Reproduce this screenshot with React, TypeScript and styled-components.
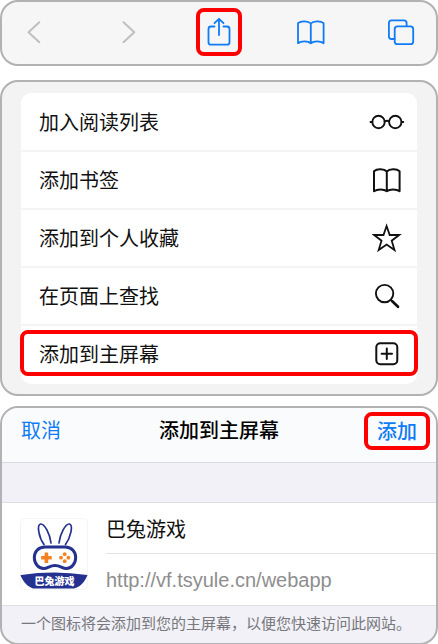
import React from "react";
import styled, { createGlobalStyle } from "styled-components";

const GlobalStyle = createGlobalStyle`
  *, *::before, *::after { box-sizing: border-box; }
  body {
    margin: 0;
    background: #fff;
    color: #111;
    font-family: "Noto Sans CJK SC", "Liberation Sans", sans-serif;
    font-size: 20px;
    line-height: 30px;
  }
  button, input { font: inherit; color: inherit; }
`;

const highlight = "#fe0000";
const blue = "#0f7cf5";

const Page = styled.main`
  display: flex;
  flex-direction: column;
`;

const Panel = styled.section`
  border: 2px solid #b2b2b2;
  border-radius: 18px;
  overflow: hidden;
`;

const Toolbar = styled(Panel)`
  display: flex;
  justify-content: space-between;
  padding: 6px 11px 8px;
  margin-bottom: 14px;
  background: #f6f6f6;
`;

const ToolButton = styled.button<{ $marked?: boolean; $muted?: boolean }>`
  display: flex;
  align-items: center;
  justify-content: center;
  width: 46px;
  height: 48px;
  padding: 0;
  background: none;
  border: 4px solid ${(p) => (p.$marked ? highlight : "transparent")};
  border-radius: 8px;
  color: ${(p) => (p.$muted ? "#bfbfbf" : blue)};
`;

const SheetPanel = styled(Panel)`
  padding: 11px 19px 10px;
  margin-bottom: 10px;
  background: #f3f3f3;
`;

const ActionList = styled.ul`
  list-style: none;
  margin: 0;
  padding: 1px 0 0;
  background: #fff;
  border-radius: 10px;
`;

const ActionItem = styled.li<{ $marked?: boolean }>`
  position: relative;
  border-bottom: 2px solid #f4f4f4;
  &:last-child { border-bottom-color: transparent; }
  ${(p) =>
    p.$marked &&
    `&::after {
      content: "";
      position: absolute;
      inset: 4px -1px 6px;
      border: 4px solid ${highlight};
      border-radius: 8px;
      pointer-events: none;
    }`}
`;

const ActionButton = styled.button`
  display: flex;
  align-items: center;
  justify-content: space-between;
  width: 100%;
  padding: 13px 12px 13px 18px;
  border: 0;
  background: none;
  text-align: left;
`;

const IconSlot = styled.span`
  display: flex;
  justify-content: center;
  width: 36px;
`;

const FormPanel = styled(Panel)`
  background: #f1f1f7;
`;

const FormHeader = styled.header`
  display: grid;
  grid-template-columns: 1fr auto 1fr;
  align-items: start;
  padding: 4px 6px 12px;
  background: #fafbfd;
  border-bottom: 1px solid #d9d9de;
`;

const Title = styled.h1`
  margin: 0;
  padding: 3px 0;
  font-size: 20px;
  font-weight: 500;
  color: #000;
`;

const TextButton = styled.button<{ $marked?: boolean }>`
  justify-self: ${(p) => (p.$marked ? "end" : "start")};
  padding: ${(p) => (p.$marked ? "0 9px" : "3px 13px")};
  border: ${(p) => (p.$marked ? `4px solid ${highlight}` : "0")};
  border-radius: 8px;
  background: none;
  color: ${blue};
  font-weight: ${(p) => (p.$marked ? 500 : 400)};
`;

const AppCard = styled.div`
  display: flex;
  align-items: center;
  gap: 18px;
  margin-top: 39px;
  padding-left: 18px;
  background: #fff;
  border-top: 1px solid #dedee3;
  border-bottom: 1px solid #dedee3;
`;

const Fields = styled.div`
  flex: 1;
  min-width: 0;
`;

const NameInput = styled.input`
  display: block;
  width: 100%;
  height: 51px;
  padding: 0;
  border: 0;
  border-bottom: 1px solid #e4e4e6;
  outline: 0;
  background: none;
`;

const Address = styled.p`
  margin: 0;
  padding: 11px 0 10px;
  color: #8e8e8e;
  font-family: "Liberation Sans", sans-serif;
`;

const Note = styled.p`
  margin: 0;
  padding: 5px 0 8px 19px;
  color: #77777c;
  font-size: 15px;
  line-height: 24px;
  white-space: nowrap;
`;

type IconProps = { w: number; h: number; stroke?: number; children: React.ReactNode };

const Icon = ({ w, h, stroke = 2, children }: IconProps) => (
  <svg
    width={w}
    height={h}
    viewBox={`0 0 ${w} ${h}`}
    fill="none"
    stroke="currentColor"
    strokeWidth={stroke}
    strokeLinecap="round"
    strokeLinejoin="round"
    aria-hidden="true"
  >
    {children}
  </svg>
);

const BackIcon = () => (
  <Icon w={28} h={28}><path d="M17.3 4.2L6.5 14.2L17.3 24.2" /></Icon>
);
const ForwardIcon = () => (
  <Icon w={28} h={28}><path d="M9.5 4.2L20.3 14.2L9.5 24.2" /></Icon>
);
const ShareIcon = () => (
  <Icon w={28} h={32} stroke={1.8}>
    <path d="M9.5 10.5H6Q3.5 10.5 3.500 13V26.200Q3.500 28.700 6 28.700H22Q24.500 28.700 24.500 26.200V13Q24.500 10.500 22 10.500H18.500M14 19V3M9.500 7.200L14 2.800L18.500 7.200" />
  </Icon>
);
const BookIcon = ({ stroke = 1.8 }: { stroke?: number }) => (
  <Icon w={28} h={26} stroke={stroke}>
    <path d="M13.800 4.500C11.300 1.800 4 1.400 1 4.200V24.200C4 21.800 11 21.800 13.800 24.200C16.600 21.800 23.600 21.800 26.600 24.200V4.200C23.600 1.400 16.300 1.800 13.800 4.500V24.200" />
  </Icon>
);
const TabsIcon = () => (
  <Icon w={28} h={28} stroke={1.8}>
    <path d="M6.500 21H3.500Q0.900 21 0.900 18.400V5Q0.900 2.400 3.500 2.400H16Q18.600 2.400 18.600 5V8" />
    <rect x="6.700" y="8.400" width="18.500" height="17.800" rx="2.800" />
  </Icon>
);
const GlassesIcon = () => (
  <Icon w={36} h={20} stroke={1.9}>
    <circle cx="9.500" cy="10" r="6.200" />
    <circle cx="26.300" cy="10" r="6.200" />
    <path d="M15.700 9.300Q18 8.200 20.100 9.300M1.500 10H3.300M32.500 10H34.300" />
  </Icon>
);
const StarIcon = () => (
  <Icon w={30} h={30} stroke={1.8}>
    <path strokeLinejoin="miter" d="M14.600 3L17.700 12H27.200L19.700 17.700L22.500 27L14.600 21.500L6.700 27L9.500 17.700L2 12H11.500Z" />
  </Icon>
);
const SearchIcon = () => (
  <Icon w={28} h={28} stroke={1.9}>
    <circle cx="11.600" cy="11.600" r="8.700" />
    <path d="M18 18L19.500 19.500" />
    <path d="M19.500 19.500L25 24.700" strokeWidth="2.700" />
  </Icon>
);
const PlusSquareIcon = () => (
  <Icon w={28} h={28}>
    <rect x="3.300" y="3.300" width="21" height="21" rx="4" />
    <path d="M13.800 8.600V19M8.600 13.800H19" />
  </Icon>
);

const AppLogo = () => (
  <svg width="68" height="72" viewBox="0 0 68 72" role="img" aria-label="巴兔游戏">
    <rect x="0.500" y="0.500" width="67" height="71" rx="4" fill="#fff" stroke="#f5f5f5" />
    <g fill="none" stroke="#25318f" strokeWidth="1.700" strokeLinecap="round">
      <path d="M24 26.500C19 20 16.500 7 20.500 6C24.500 5.500 30 16 31 25" />
      <path d="M45.500 26.500C50.500 20 53.500 7 49.500 6C45.500 5.500 40 16 39 25" />
      <path d="M25 29H45C52 29 55.700 34 55.700 39.500C55.700 45.500 51.500 50.500 46.500 50.500C42 50.500 40.500 47.500 35 47.500C29.500 47.500 28 50.500 23.500 50.500C18.500 50.500 14.300 45.500 14.300 39.500C14.300 34 18 29 25 29Z" strokeWidth="3" />
    </g>
    <path d="M24.600 34.500H28.200V38H31.700V41.500H28.200V45H24.600V41.500H21.100V38H24.600Z" fill="#f58220" />
    <g fill="#f58220">
      <circle cx="44.700" cy="36.200" r="1.900" />
      <circle cx="44.700" cy="43.200" r="1.900" />
      <circle cx="41" cy="39.700" r="1.900" />
      <circle cx="48.400" cy="39.700" r="1.900" />
    </g>
    <path d="M0.500 57Q18 54.500 34 54.500Q50 54.500 67.500 57C65 64 60 69 54 70.500H13C8 69 3 64 0.500 57Z" fill="#25318f" />
    <text x="34.500" y="67" textAnchor="middle" fontSize="10" fontWeight="900" fill="#fff">巴兔游戏</text>
  </svg>
);

const actions = [
  { label: "加入阅读列表", icon: <GlassesIcon /> },
  { label: "添加书签", icon: <BookIcon stroke={2} /> },
  { label: "添加到个人收藏", icon: <StarIcon /> },
  { label: "在页面上查找", icon: <SearchIcon /> },
  { label: "添加到主屏幕", icon: <PlusSquareIcon />, marked: true },
];

export default function App() {
  return (
    <>
      <GlobalStyle />
      <Page>
        <Toolbar as="nav">
          <ToolButton $muted aria-label="后退"><BackIcon /></ToolButton>
          <ToolButton $muted aria-label="前进"><ForwardIcon /></ToolButton>
          <ToolButton $marked aria-label="共享"><ShareIcon /></ToolButton>
          <ToolButton aria-label="书签"><BookIcon /></ToolButton>
          <ToolButton aria-label="标签页"><TabsIcon /></ToolButton>
        </Toolbar>
        <SheetPanel>
          <ActionList>
            {actions.map((a) => (
              <ActionItem key={a.label} $marked={a.marked}>
                <ActionButton>
                  {a.label}
                  <IconSlot>{a.icon}</IconSlot>
                </ActionButton>
              </ActionItem>
            ))}
          </ActionList>
        </SheetPanel>
        <FormPanel>
          <FormHeader>
            <TextButton>取消</TextButton>
            <Title>添加到主屏幕</Title>
            <TextButton $marked>添加</TextButton>
          </FormHeader>
          <AppCard>
            <AppLogo />
            <Fields>
              <NameInput aria-label="名称" defaultValue="巴兔游戏" />
              <Address>http://vf.tsyule.cn/webapp</Address>
            </Fields>
          </AppCard>
          <Note>一个图标将会添加到您的主屏幕，以便您快速访问此网站。</Note>
        </FormPanel>
      </Page>
    </>
  );
}
